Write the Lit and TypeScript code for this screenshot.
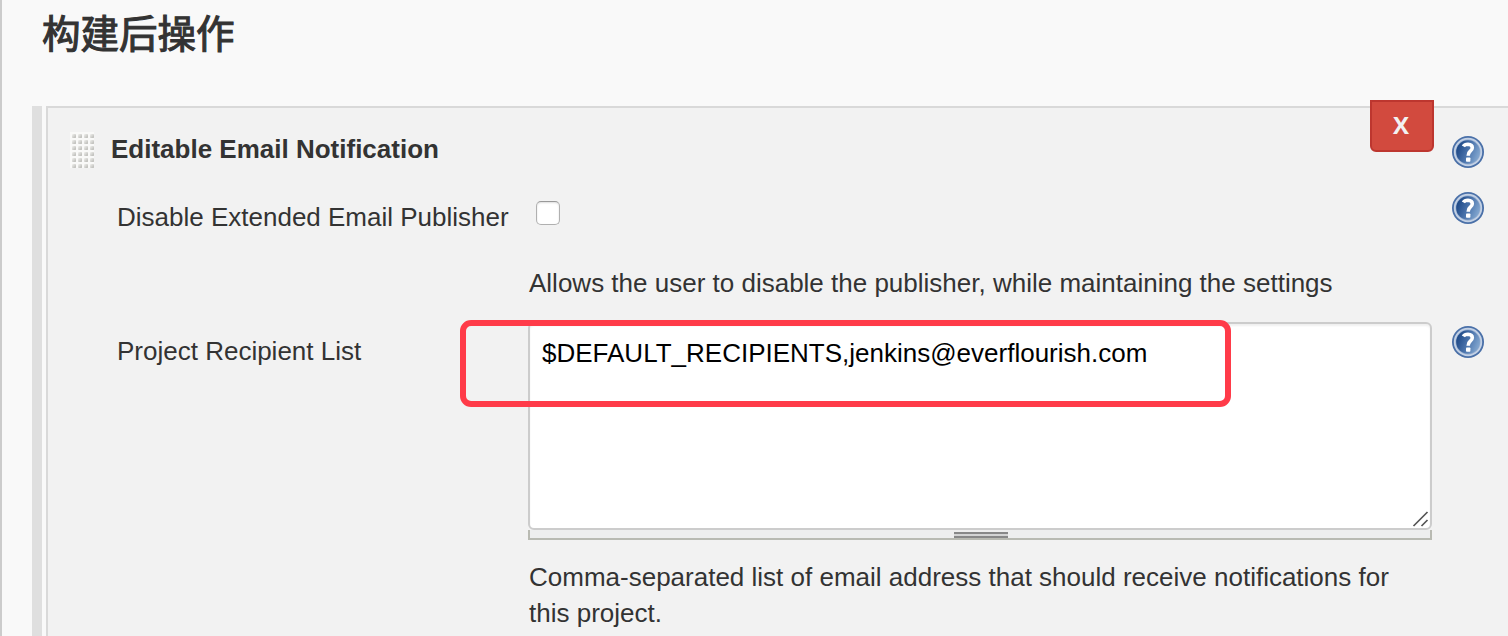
import { LitElement, html, css } from 'lit';
import { customElement } from 'lit/decorators.js';

@customElement('help-icon')
export class HelpIcon extends LitElement {
  static override styles = css`
    :host {
      display: block;
      width: 32px;
      height: 32px;
    }
    svg {
      display: block;
    }
  `;

  override render() {
    return html`
      <svg width="32" height="32" viewBox="0 0 32 32">
        <defs>
          <linearGradient id="disc" x1="0" y1="0.3" x2="1" y2="0.7">
            <stop offset="0.05" stop-color="#1f4a88" />
            <stop offset="0.5" stop-color="#4b74ac" />
            <stop offset="1" stop-color="#86aad2" />
          </linearGradient>
        </defs>
        <circle cx="16" cy="16" r="16" fill="#4a70a8" />
        <circle cx="16" cy="16" r="14.2" fill="#c3d1e5" />
        <circle cx="16" cy="16" r="12.4" fill="#92abce" />
        <circle cx="16" cy="16" r="11.8" fill="url(#disc)" />
        <path
          d="M11.4 10.4Q12.6 8.2 16 8.2Q20.3 8.3 20.3 11.8Q20.3 13.8 18.2 15.2Q16.2 16.7 16.2 19.8"
          fill="none"
          stroke="#fff"
          stroke-width="3.6"
          stroke-linejoin="round"
        />
        <rect x="14" y="21.4" width="4.4" height="4.4" rx="0.8" fill="#fff" />
      </svg>
    `;
  }
}

@customElement('drag-handle')
export class DragHandle extends LitElement {
  static override styles = css`
    :host {
      display: block;
      width: 24px;
      height: 36px;
    }
    svg {
      display: block;
    }
  `;

  override render() {
    return html`
      <svg width="24" height="36">
        <defs>
          <linearGradient id="dot" x1="0" y1="0" x2="1" y2="1">
            <stop offset="0.1" stop-color="#ecece9" />
            <stop offset="0.9" stop-color="#bcbcb8" />
          </linearGradient>
          <pattern id="dots" width="6" height="6" patternUnits="userSpaceOnUse">
            <rect width="6" height="6" fill="#f9f9f8" />
            <rect x="2" y="2" width="4" height="4" rx="0.8" fill="url(#dot)" />
          </pattern>
        </defs>
        <rect width="24" height="36" fill="url(#dots)" />
      </svg>
    `;
  }
}

@customElement('app-root')
export class AppRoot extends LitElement {
  static override styles = css`
    :host {
      display: block;
      box-sizing: border-box;
      height: 636px;
      overflow: hidden;
      border-left: 2px solid #ccc;
      background: #f9f9f9;
      color: #333;
      font-family: 'Liberation Sans', 'Noto Sans CJK SC', sans-serif;
      font-size: 26px;
      line-height: 36px;
    }
    h1 {
      margin: 0;
      padding: 7px 0 0 40px;
      height: 99px;
      font-size: 38.5px;
      line-height: 56px;
      font-weight: 400;
      -webkit-text-stroke: 1.1px #333;
    }
    .chunk {
      display: flex;
      gap: 4px;
      height: 530px;
      padding-left: 30px;
    }
    .bar {
      width: 10px;
      background: #dfdfdf;
    }
    .panel {
      flex: 1;
      box-sizing: border-box;
      padding-left: 22px;
      border: 2px solid #d9d9d9;
      border-width: 2px 0 0 2px;
      background: #f2f2f2;
    }
    .head {
      display: flex;
      align-items: flex-start;
      height: 84px;
    }
    .head drag-handle {
      margin: 24px 17px 0 0;
    }
    .title {
      flex: 1;
      padding-top: 23px;
      font-weight: 700;
    }
    .delete {
      box-sizing: border-box;
      width: 64px;
      height: 52px;
      margin: -8px 18px 0 0;
      padding: 0 2px 3px 0;
      border: 2px solid #bd362f;
      border-radius: 0 0 6px 6px;
      background: #d24a3e;
      color: #f2f2f2;
      font: 700 24px 'Open Sans', sans-serif;
    }
    .head help-icon {
      margin: 28px 24px 0 0;
    }
    .row {
      display: grid;
      grid-template-columns: 411px 904px 52px;
      padding-left: 47px;
    }
    .row help-icon {
      margin-left: 20px;
    }
    .disable {
      height: 130px;
    }
    .disable .label {
      padding-top: 7px;
    }
    .checkbox {
      box-sizing: border-box;
      width: 24px;
      height: 24px;
      margin: 9px 0 0 8px;
      border: 1px solid #b0b0b0;
      border-top-color: #999;
      border-radius: 5px;
      background: #fff;
      box-shadow: inset 0 1px 2px #ddd;
    }
    .note {
      padding-left: 1px;
    }
    .disable .note {
      padding-top: 40px;
    }
    .recipients .label {
      padding-top: 11px;
    }
    .recipients help-icon {
      margin-top: 4px;
    }
    .textarea {
      position: relative;
      box-sizing: border-box;
      height: 208px;
      padding: 11px 12px;
      border: 2px solid #ccc;
      border-radius: 6px;
      background: #fff;
      box-shadow: inset 0 2px 2px #f0f0f0;
      color: #000;
    }
    .grip {
      position: absolute;
      right: 0;
      bottom: 0;
    }
    .mark {
      position: absolute;
      left: -70px;
      top: -4px;
      box-sizing: border-box;
      width: 771px;
      height: 87px;
      border: 6px solid #ff3b49;
      border-radius: 11px;
    }
    .resizer {
      box-sizing: border-box;
      display: flex;
      justify-content: center;
      height: 10px;
      margin-bottom: 19px;
      border: 2px solid #b9bab2;
      border-top: 0;
      background: #eee;
    }
    .resizer span {
      box-sizing: border-box;
      width: 54px;
      height: 6px;
      margin: 2px 0 0 2px;
      border: 2px solid #888;
      border-width: 2px 0;
      background: #d4d4d4;
    }
  `;

  override render() {
    return html`
      <h1>构建后操作</h1>
      <div class="chunk">
        <div class="bar"></div>
        <div class="panel">
          <div class="head">
            <drag-handle></drag-handle>
            <div class="title">Editable Email Notification</div>
            <button class="delete">X</button>
            <help-icon></help-icon>
          </div>
          <div class="row disable">
            <div class="label">Disable Extended Email Publisher</div>
            <div>
              <div class="checkbox"></div>
              <div class="note">
                Allows the user to disable the publisher, while maintaining the settings
              </div>
            </div>
            <help-icon></help-icon>
          </div>
          <div class="row recipients">
            <div class="label">Project Recipient List</div>
            <div>
              <div class="textarea">
                $DEFAULT_RECIPIENTS,jenkins@everflourish.com
                <svg class="grip" width="20" height="20" fill="none" stroke="#555" stroke-width="1.7">
                  <path d="M3.5 18L17.5 4M11.5 18L17.5 12" />
                </svg>
                <div class="mark"></div>
              </div>
              <div class="resizer"><span></span></div>
              <div class="note">
                Comma-separated list of email address that should receive notifications for this
                project.
              </div>
            </div>
            <help-icon></help-icon>
          </div>
        </div>
      </div>
    `;
  }
}

declare global {
  interface HTMLElementTagNameMap {
    'app-root': AppRoot;
    'help-icon': HelpIcon;
    'drag-handle': DragHandle;
  }
}
